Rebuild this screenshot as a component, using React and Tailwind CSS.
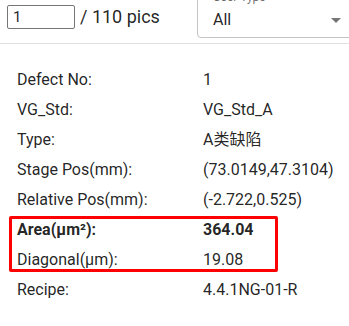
import React from "react";

const rows = [
  { label: "Defect No:", value: "1" },
  { label: "VG_Std:", value: "VG_Std_A" },
  { label: "Type:", value: "A类缺陷" },
  { label: "Stage Pos(mm):", value: "(73.0149,47.3104)" },
  { label: "Relative Pos(mm):", value: "(-2.722,0.525)" },
];

const Row = ({ label, value, bold }) => (
  <div className={`flex h-[30px] items-center ${bold ? "font-bold" : ""}`}>
    <span className="w-[186px] shrink-0">{label}</span>
    <span>{value}</span>
  </div>
);

export default function App() {
  return (
    <div
      className="w-[349px] h-[326px] overflow-hidden bg-white text-[rgba(0,0,0,0.87)]"
      style={{ fontFamily: "Roboto, 'Noto Sans CJK SC', sans-serif" }}
    >
      <div className="flex h-[44px] border-b border-[#e0e0e0]">
        <div className="flex items-start pl-[7px] pt-[5px] w-[190px] shrink-0">
          <input
            defaultValue="1"
            className="w-[68px] h-[24px] border border-[#767676] rounded-[2px] px-[5px] text-[15px] outline-none"
          />
          <span className="ml-[5px] text-[18px] leading-[24px]">/ 110 pics</span>
        </div>
        <div className="relative ml-[7px] mt-[-3px] h-[41px] w-[180px] shrink-0 rounded-[4px] border border-[#c4c4c4]">
          <span className="absolute left-[10px] top-[-9px] bg-white px-[5px] text-[12px] leading-[16px] text-[rgba(0,0,0,0.6)]">
            User Type
          </span>
          <span className="absolute left-[15px] top-[10px] text-[16px] leading-[24px]">All</span>
          <svg
            className="absolute left-[126px] top-[10px]"
            width="24"
            height="24"
            viewBox="0 0 24 24"
            fill="#757575"
          >
            <path d="M7 10l5 5 5-5z" />
          </svg>
        </div>
      </div>
      <div className="pl-[17px] pt-[21px] text-[16px]">
        {rows.map((r) => (
          <Row key={r.label} {...r} />
        ))}
        <div className="relative">
          <Row label="Area(μm²):" value="364.04" bold />
          <Row label="Diagonal(μm):" value="19.08" />
          <div className="absolute left-[-8px] top-[1px] w-[269px] h-[56px] border-[3px] border-[#ff0000] rounded-[2px]" />
        </div>
        <Row label="Recipe:" value="4.4.1NG-01-R" />
      </div>
    </div>
  );
}
